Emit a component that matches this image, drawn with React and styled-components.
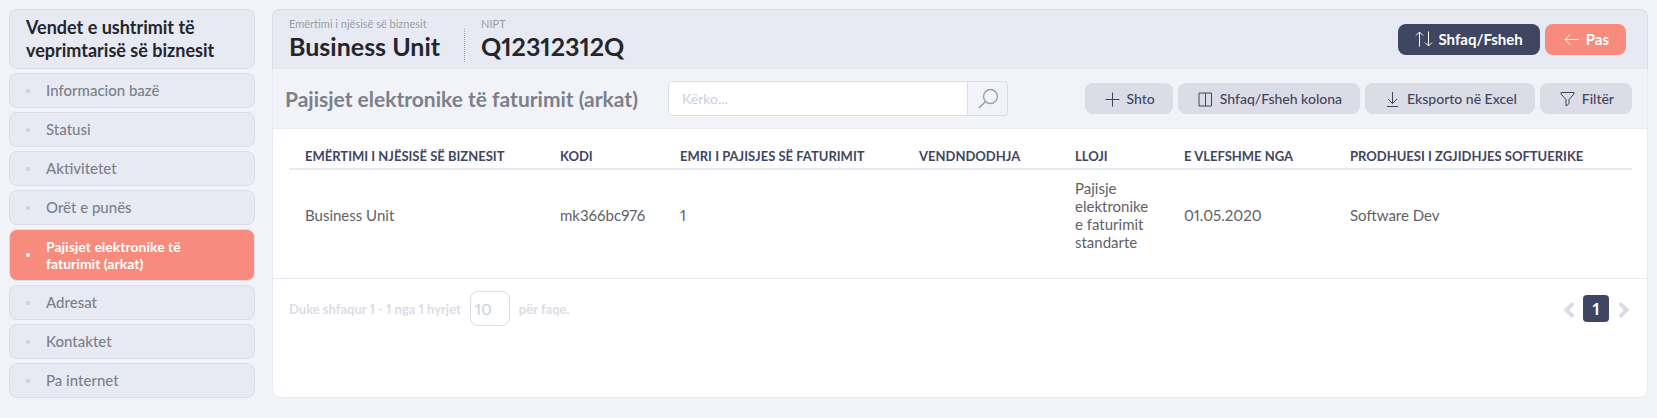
import React, { useState } from 'react';
import styled, { createGlobalStyle, css } from 'styled-components';

const Base = {
  Fundo: '#f2f3f9',
  Painel: '#e7eaf3',
  Borda: '#dcdce6',
  Branco: '#ffffff',
  Preto: '#24262b',
  Cinza: '#7c8089',
  CinzaClaro: '#9b9da5',
  CinzaTabela: '#5f6167',
  CinzaPonto: '#c8d1da',
  Azul: '#3f4662',
  Coral: '#f78b7d',
};

const GlobalStyle = createGlobalStyle`
  * {
    box-sizing: border-box;
  }
  body {
    background: ${Base.Fundo};
    color: ${Base.Preto};
    font-family: Lato, 'Liberation Sans', sans-serif;
    font-size: 15px;
    font-variant-numeric: proportional-nums;
    line-height: 18px;
    margin: 0;
  }
  button,
  input {
    font-family: inherit;
    font-variant-numeric: inherit;
  }
`;

const Pagina = styled.div`
  align-items: stretch;
  display: flex;
  gap: 17px;
  padding: 9px 9px 20px;
`;

const Menu = styled.nav`
  display: flex;
  flex: 0 0 246px;
  flex-direction: column;
  gap: 4px;
`;

const caixa = css`
  background: ${Base.Painel};
  border: 1px solid ${Base.Borda};
  border-radius: 8px;
`;

const MenuTitulo = styled.h2`
  ${caixa}
  font-size: 18px;
  font-weight: 700;
  line-height: 23px;
  margin: 0;
  padding: 6px 16px;
`;

const MenuItem = styled.a`
  ${caixa}
  align-items: center;
  color: ${Base.Cinza};
  display: flex;
  font-size: 15px;
  font-weight: 500;
  gap: 16px;
  line-height: 17px;
  padding: 8px 48px 8px 16px;
  text-decoration: none;
  ${props =>
    props.$ativo &&
    css`
      background: ${Base.Coral};
      color: ${Base.Branco};
      font-size: 14px;
      font-weight: 700;
    `}
  &::before {
    background: ${props => (props.$ativo ? Base.Branco : Base.CinzaPonto)};
    border-radius: 50%;
    content: '';
    flex: 0 0 4px;
    height: 4px;
  }
`;

const Conteudo = styled.main`
  background: ${Base.Branco};
  border: 1px solid ${Base.Painel};
  border-radius: 8px;
  flex: 1;
  min-width: 0;
`;

const Cabecalho = styled.header`
  align-items: center;
  background: ${Base.Painel};
  border: 1px solid ${Base.Borda};
  border-bottom: 0;
  border-radius: 8px 8px 0 0;
  display: flex;
  justify-content: space-between;
  margin: -1px -1px 0;
  padding: 6px 21px 7px 16px;
`;

const Dados = styled.dl`
  align-items: flex-end;
  display: flex;
  margin: 0;
`;

const Dado = styled.div`
  dt {
    color: ${Base.CinzaClaro};
    font-size: 11px;
    line-height: 15px;
  }
  dd {
    font-size: 25px;
    font-weight: 700;
    line-height: 31px;
    margin: 0;
  }
`;

const Separador = styled.div`
  border-left: 1px dotted ${Base.CinzaClaro};
  height: 33px;
  margin: 0 16px 0 24px;
`;

const Acoes = styled.div`
  display: flex;
  gap: 5px;
`;

const Botao = styled.button`
  align-items: center;
  background: ${Base.Borda};
  border: 0;
  border-radius: 8px;
  color: ${Base.Azul};
  cursor: pointer;
  display: flex;
  font-size: 14px;
  font-weight: 500;
  gap: 6px;
  height: 31px;
  padding: 0 18px;
  white-space: nowrap;
  ${props =>
    props.$fundo &&
    css`
      background: ${props.$fundo};
      color: ${Base.Branco};
      font-size: 15px;
      font-weight: 700;
      padding: 0 17px;
    `}
`;

const Icone = styled.svg`
  fill: none;
  flex: none;
  height: 18px;
  stroke: currentColor;
  width: 18px;
`;

const Barra = styled.div`
  align-items: center;
  background: ${Base.Fundo};
  border-bottom: 1px solid ${Base.Painel};
  display: flex;
  padding: 12px 15px 12px 12px;
  ${Acoes} {
    margin-left: auto;
  }
`;

const Titulo = styled.h1`
  color: ${Base.Cinza};
  flex: 0 0 383px;
  font-size: 21px;
  font-weight: 700;
  line-height: 25px;
  margin: 0;
`;

const Busca = styled.form`
  border: 1px solid ${Base.Borda};
  border-radius: 4px;
  display: flex;
  flex: 0 1 340px;
  height: 35px;
  margin: 0;
  overflow: hidden;
  input {
    background: ${Base.Branco};
    border: 0;
    border-right: 1px solid ${Base.Borda};
    flex: 1;
    font-size: 14px;
    min-width: 0;
    outline: 0;
    padding: 0 13px;
  }
  input::placeholder {
    color: ${Base.CinzaPonto};
  }
  button {
    align-items: center;
    background: transparent;
    border: 0;
    color: ${Base.CinzaClaro};
    cursor: pointer;
    display: flex;
    justify-content: center;
    padding: 0;
    width: 39px;
  }
`;

const IconeBusca = styled(Icone)`
  height: 22px;
  width: 22px;
`;

const AreaTabela = styled.div`
  border-bottom: 1px solid ${Base.Painel};
  padding: 16px 15px 17px 16px;
`;

const Tabela = styled.table`
  border-collapse: collapse;
  table-layout: fixed;
  width: 100%;
  th,
  td {
    padding: 0 16px;
    text-align: left;
  }
  th {
    border-bottom: 2px solid ${Base.Painel};
    color: ${Base.Azul};
    font-size: 13px;
    font-weight: 700;
    line-height: 16px;
    padding-bottom: 4px;
    padding-top: 3px;
    text-transform: uppercase;
    white-space: nowrap;
  }
  td {
    color: ${Base.CinzaTabela};
    font-size: 15px;
    padding-bottom: 10px;
    padding-top: 9px;
  }
`;

const Rodape = styled.footer`
  align-items: center;
  color: ${Base.Borda};
  display: flex;
  font-size: 13px;
  font-weight: 700;
  justify-content: space-between;
  padding: 12px 16px;
`;

const PorPagina = styled.label`
  align-items: center;
  display: flex;
  gap: 9px;
  input {
    background: ${Base.Branco};
    border: 1px solid ${Base.Borda};
    border-radius: 8px;
    color: ${Base.CinzaPonto};
    font-size: 16px;
    height: 35px;
    padding: 0 4px;
    width: 40px;
  }
`;

const Paginacao = styled.div`
  align-items: center;
  display: flex;
  gap: 6px;
  button {
    background: transparent;
    border: 0;
    color: ${Base.Borda};
    cursor: pointer;
    display: flex;
    padding: 0;
  }
  button[aria-current] {
    align-items: center;
    background: ${Base.Azul};
    border-radius: 4px;
    color: ${Base.Branco};
    font-size: 17px;
    font-weight: 700;
    height: 27px;
    justify-content: center;
    width: 26px;
  }
`;

const Seta = styled(Icone)`
  stroke-linecap: round;
  stroke-width: 4;
  width: 16px;
`;

const itensMenu = [
  'Informacion bazë',
  'Statusi',
  'Aktivitetet',
  'Orët e punës',
  'Pajisjet elektronike të faturimit (arkat)',
  'Adresat',
  'Kontaktet',
  'Pa internet',
];

const colunas = [
  { titulo: 'Emërtimi i njësisë së biznesit', campo: 'njesia', largura: 255 },
  { titulo: 'Kodi', campo: 'kodi', largura: 120 },
  { titulo: 'Emri i pajisjes së faturimit', campo: 'emri', largura: 239 },
  { titulo: 'Vendndodhja', campo: 'vendi', largura: 156 },
  { titulo: 'Lloji', campo: 'lloji', largura: 109 },
  { titulo: 'E vlefshme nga', campo: 'data', largura: 166 },
  { titulo: 'Prodhuesi i zgjidhjes softuerike', campo: 'prodhuesi' },
];

const Coluna = styled.col`
  width: ${props => (props.$largura ? `${props.$largura}px` : 'auto')};
`;

const linhas = [
  {
    njesia: 'Business Unit',
    kodi: 'mk366bc976',
    emri: '1',
    vendi: '',
    lloji: 'Pajisje elektronike e faturimit standarte',
    data: '01.05.2020',
    prodhuesi: 'Software Dev',
  },
];

const App = () => {
  const [ativo, setAtivo] = useState(4);
  const [busca, setBusca] = useState('');
  const [porPagina, setPorPagina] = useState('10');

  const onClickItem = (e, indice) => {
    e.preventDefault();
    setAtivo(indice);
  };

  return (
    <Pagina>
      <GlobalStyle />
      <Menu>
        <MenuTitulo>Vendet e ushtrimit të veprimtarisë së biznesit</MenuTitulo>
        {itensMenu.map((item, indice) => (
          <MenuItem
            key={item}
            href="#"
            $ativo={indice === ativo}
            onClick={e => onClickItem(e, indice)}
          >
            {item}
          </MenuItem>
        ))}
      </Menu>
      <Conteudo>
        <Cabecalho>
          <Dados>
            <Dado>
              <dt>Emërtimi i njësisë së biznesit</dt>
              <dd>Business Unit</dd>
            </Dado>
            <Separador />
            <Dado>
              <dt>NIPT</dt>
              <dd>Q12312312Q</dd>
            </Dado>
          </Dados>
          <Acoes>
            <Botao type="button" $fundo={Base.Azul}>
              <Icone viewBox="0 0 18 18">
                <path d="M4.5 16.5V2M1 5.5l3.5-3.5L8 5.5M13.5 1.5V16M10 12.5l3.5 3.5 3.5-3.5" />
              </Icone>
              Shfaq/Fsheh
            </Botao>
            <Botao type="button" $fundo={Base.Coral}>
              <Icone viewBox="0 0 18 18">
                <path d="M17 9.5H3M8 4.5l-5 5 5 5" />
              </Icone>
              Pas
            </Botao>
          </Acoes>
        </Cabecalho>
        <Barra>
          <Titulo>Pajisjet elektronike të faturimit (arkat)</Titulo>
          <Busca onSubmit={e => e.preventDefault()}>
            <input
              type="text"
              aria-label="Kërko"
              placeholder="Kërko..."
              value={busca}
              onChange={e => setBusca(e.target.value)}
            />
            <button type="submit" aria-label="Kërko">
              <IconeBusca viewBox="0 0 22 22">
                <circle cx="13.5" cy="8.5" r="7" strokeWidth="1.4" />
                <path d="M8.5 13.5L2 20" strokeWidth="1.6" />
              </IconeBusca>
            </button>
          </Busca>
          <Acoes>
            <Botao type="button">
              <Icone viewBox="0 0 18 18">
                <path d="M9.5 2.5v14M2.5 9.5h14" />
              </Icone>
              Shto
            </Botao>
            <Botao type="button">
              <Icone viewBox="0 0 18 18">
                <path d="M3 3h12.5v13H3zM9.5 3v13" />
              </Icone>
              Shfaq/Fsheh kolona
            </Botao>
            <Botao type="button">
              <Icone viewBox="0 0 18 18">
                <path d="M9.5 2v11.5M5 9l4.5 4.5L14 9M4 16.5h11" />
              </Icone>
              Eksporto në Excel
            </Botao>
            <Botao type="button">
              <Icone viewBox="0 0 18 18">
                <path d="M3 2.5h13v1.5l-5 5.500v4L8 16V9.500L3 4z" />
              </Icone>
              Filtër
            </Botao>
          </Acoes>
        </Barra>
        <AreaTabela>
          <Tabela>
            <colgroup>
              {colunas.map(coluna => (
                <Coluna key={coluna.campo} $largura={coluna.largura} />
              ))}
            </colgroup>
            <thead>
              <tr>
                {colunas.map(coluna => (
                  <th key={coluna.campo} scope="col">
                    {coluna.titulo}
                  </th>
                ))}
              </tr>
            </thead>
            <tbody>
              {linhas.map(linha => (
                <tr key={linha.kodi}>
                  {colunas.map(coluna => (
                    <td key={coluna.campo}>{linha[coluna.campo]}</td>
                  ))}
                </tr>
              ))}
            </tbody>
          </Tabela>
        </AreaTabela>
        <Rodape>
          <PorPagina>
            <span>Duke shfaqur 1 - 1 nga 1 hyrjet</span>
            <input
              type="text"
              value={porPagina}
              onChange={e => setPorPagina(e.target.value)}
            />
            <span>për faqe.</span>
          </PorPagina>
          <Paginacao>
            <button type="button" aria-label="Faqja e mëparshme">
              <Seta viewBox="0 0 16 18">
                <path d="M11 4.500L5.500 10l5.500 5.500" />
              </Seta>
            </button>
            <button type="button" aria-current="page">
              1
            </button>
            <button type="button" aria-label="Faqja tjetër">
              <Seta viewBox="0 0 16 18">
                <path d="M6 4.500L11.500 10 6 15.500" />
              </Seta>
            </button>
          </Paginacao>
        </Rodape>
      </Conteudo>
    </Pagina>
  );
};

export default App;
